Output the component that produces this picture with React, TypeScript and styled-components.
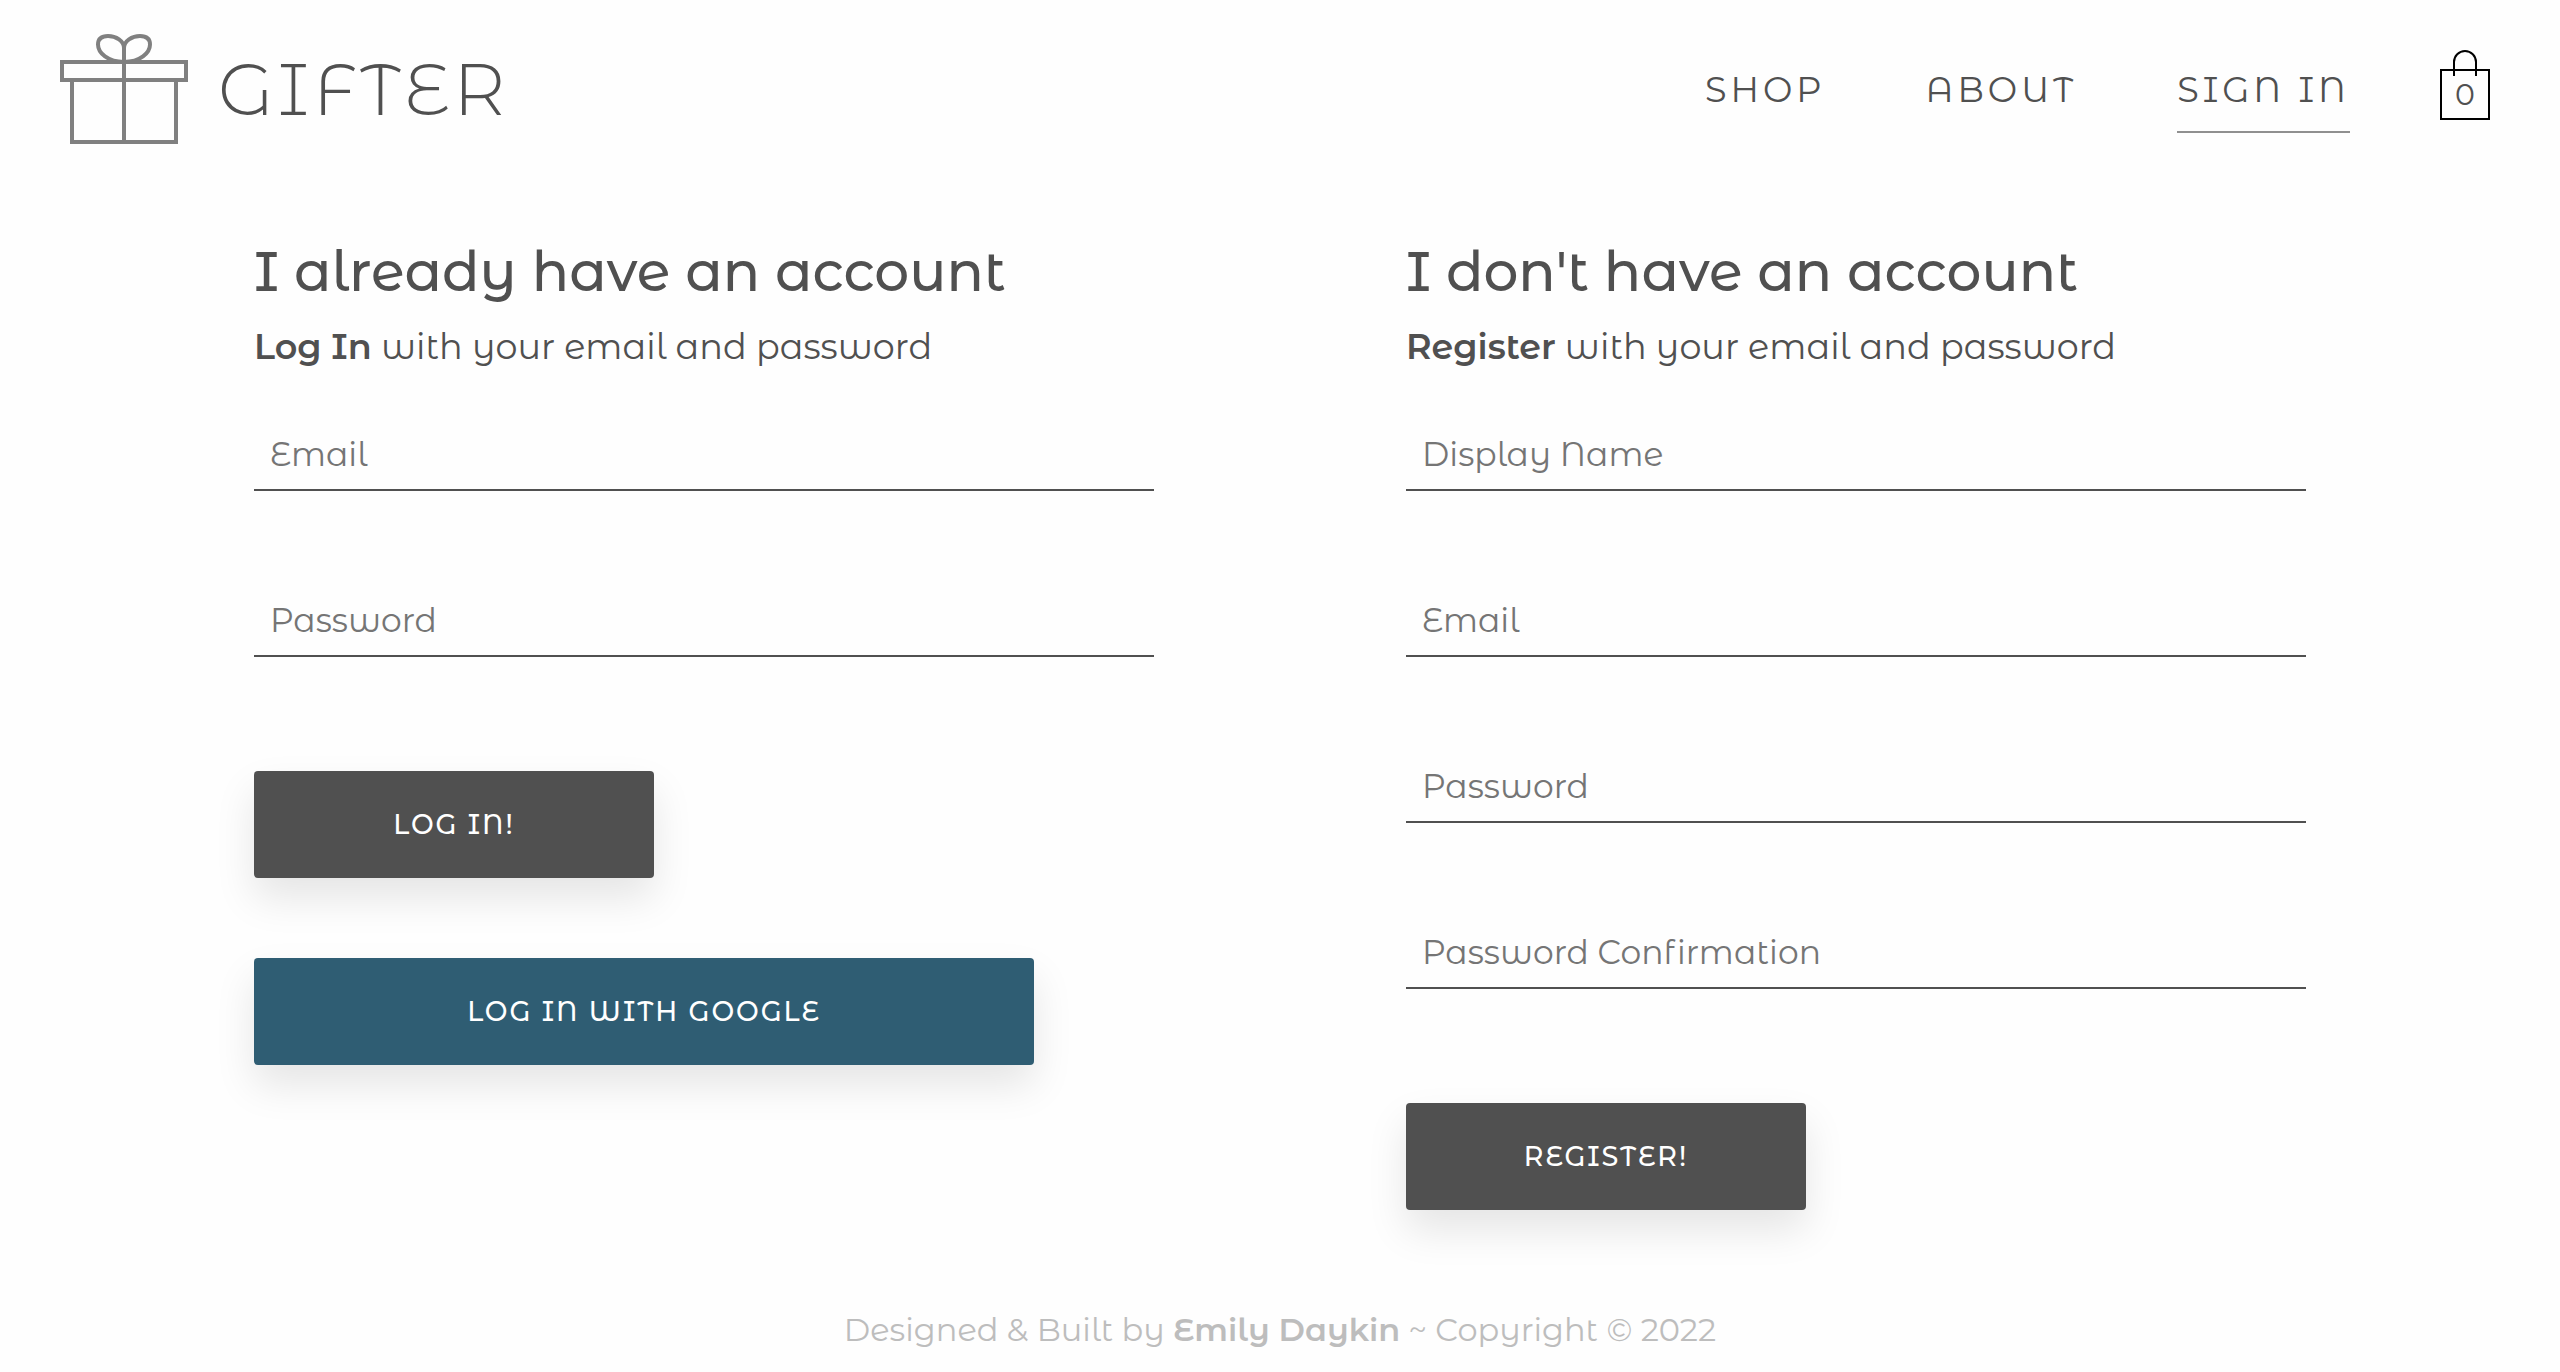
import React from "react";
import styled, { createGlobalStyle } from "styled-components";

const colors = {
  page: "#fefefe",
  text: "#505050",
  logo: "#808080",
  placeholder: "#757575",
  underline: "#909090",
  google: "#2f5d73",
  footer: "#bdbdbd",
};

const GlobalStyle = createGlobalStyle`
  *, *::before, *::after { box-sizing: border-box; }
  body {
    margin: 0;
    background: ${colors.page};
    color: ${colors.text};
    font-family: "Montserrat Alternates", "DejaVu Sans", sans-serif;
  }
  strong {
    font-weight: 600;
  }
`;

const Page = styled.div`
  display: flex;
  flex-direction: column;
  min-height: 100vh;
`;

const Header = styled.header`
  display: flex;
  align-items: center;
  justify-content: space-between;
  padding: 34px 70px 34px 60px;
`;

const Brand = styled.a`
  display: flex;
  align-items: center;
  gap: 30px;
  color: ${colors.text};
  text-decoration: none;
`;

const BrandName = styled.span`
  font-size: 72px;
  font-weight: 300;
  line-height: 84px;
  letter-spacing: 4px;
`;

const Nav = styled.nav`
  display: flex;
  align-items: center;
  gap: 100px;
`;

const NavLink = styled.a<{ $active?: boolean }>`
  padding: 23px 0 19px;
  border-bottom: 2px solid ${(p) => (p.$active ? colors.underline : "transparent")};
  color: ${colors.text};
  font-size: 35px;
  line-height: 44px;
  letter-spacing: 4px;
  text-decoration: none;
`;

const BagButton = styled.button`
  display: grid;
  justify-items: center;
  margin-left: -10px;
  padding: 0 0 8px;
  border: 0;
  background: none;
  color: ${colors.text};
  font: inherit;
  font-size: 30px;
  cursor: pointer;

  > * {
    grid-area: 1 / 1;
  }
`;

const BagCount = styled.span`
  align-self: end;
  line-height: 50px;
`;

const Main = styled.main`
  display: grid;
  grid-template-columns: repeat(2, minmax(0, 900px));
  justify-content: center;
  column-gap: 252px;
  padding: 61px 60px 60px;

  @media (max-width: 1900px) {
    grid-template-columns: minmax(0, 900px);
    row-gap: 80px;
  }
`;

const Title = styled.h2`
  margin: 0 0 20px;
  font-size: 55px;
  font-weight: 500;
  line-height: 66px;
`;

const Subtitle = styled.p`
  margin: 0 0 50px;
  font-size: 35px;
  line-height: 44px;
`;

const Form = styled.form`
  display: flex;
  flex-direction: column;
`;

const Field = styled.input`
  width: 100%;
  height: 72px;
  margin-bottom: 94px;
  padding: 0 16px;
  border: 0;
  border-bottom: 2px solid ${colors.text};
  border-radius: 0;
  outline: 0;
  background: none;
  color: ${colors.text};
  font-family: inherit;
  font-size: 33px;

  &::placeholder {
    color: ${colors.placeholder};
    opacity: 1;
  }
`;

const Actions = styled.div`
  display: flex;
  flex-direction: column;
  align-items: flex-start;
  gap: 80px;
  padding-top: 20px;
`;

const Button = styled.button<{ $google?: boolean }>`
  width: ${(p) => (p.$google ? "780px" : "400px")};
  max-width: 100%;
  padding: 36px 20px;
  border: 0;
  border-radius: 4px;
  background: ${(p) => (p.$google ? colors.google : colors.text)};
  box-shadow: 0 20px 40px rgba(0, 0, 0, 0.1);
  color: #fff;
  font-family: inherit;
  font-size: 27px;
  font-weight: 500;
  line-height: 35px;
  letter-spacing: 2px;
  text-transform: uppercase;
  cursor: pointer;
`;

const Footer = styled.footer`
  margin-top: auto;
  padding: 0 60px 22px;
  color: ${colors.footer};
  font-size: 32px;
  line-height: 40px;
  text-align: center;
`;

const GiftLogo = () => (
  <svg width="128" height="110" viewBox="0 0 128 110" fill="none" stroke={colors.logo} strokeWidth="4" aria-hidden="true">
    <rect x="2" y="28" width="124" height="18" />
    <path d="M12 46V108H116V46M64 12V108" />
    <path d="M64 28C48 28 38 19 38 10.500C38 4.500 42 2 48 2C56 2 64 7 64 14C64 7 72 2 80 2C86 2 90 4.500 90 10.500C90 19 80 28 64 28" />
  </svg>
);

const BagIcon = () => (
  <svg width="50" height="70" viewBox="0 0 50 70" fill="none" stroke="#000" strokeWidth="2" aria-hidden="true">
    <rect x="1" y="20" width="48" height="49" />
    <path d="M14 26V12A11 11 0 0 1 36 12V26" />
  </svg>
);

type FieldSpec = { type: string; label: string };

const loginFields: FieldSpec[] = [
  { type: "email", label: "Email" },
  { type: "password", label: "Password" },
];

const registerFields: FieldSpec[] = [
  { type: "text", label: "Display Name" },
  { type: "email", label: "Email" },
  { type: "password", label: "Password" },
  { type: "password", label: "Password Confirmation" },
];

const Fields = ({ items }: { items: FieldSpec[] }) => (
  <>
    {items.map((f) => (
      <Field key={f.label} type={f.type} placeholder={f.label} aria-label={f.label} />
    ))}
  </>
);

const stay = (e: React.FormEvent) => e.preventDefault();

export default function App() {
  return (
    <Page>
      <GlobalStyle />
      <Header>
        <Brand href="#home">
          <GiftLogo />
          <BrandName>GIFTER</BrandName>
        </Brand>
        <Nav>
          <NavLink href="#shop">SHOP</NavLink>
          <NavLink href="#about">ABOUT</NavLink>
          <NavLink href="#sign-in" $active>SIGN IN</NavLink>
          <BagButton type="button" aria-label="Shopping bag">
            <BagIcon />
            <BagCount>0</BagCount>
          </BagButton>
        </Nav>
      </Header>
      <Main>
        <section>
          <Title>I already have an account</Title>
          <Subtitle><strong>Log In</strong> with your email and password</Subtitle>
          <Form onSubmit={stay}>
            <Fields items={loginFields} />
            <Actions>
              <Button type="submit">Log In!</Button>
              <Button type="button" $google>Log In with Google</Button>
            </Actions>
          </Form>
        </section>
        <section>
          <Title>I don't have an account</Title>
          <Subtitle><strong>Register</strong> with your email and password</Subtitle>
          <Form onSubmit={stay}>
            <Fields items={registerFields} />
            <Actions>
              <Button type="submit">Register!</Button>
            </Actions>
          </Form>
        </section>
      </Main>
      <Footer>
        Designed &amp; Built by <strong>Emily Daykin</strong> ~ Copyright © 2022
      </Footer>
    </Page>
  );
}
